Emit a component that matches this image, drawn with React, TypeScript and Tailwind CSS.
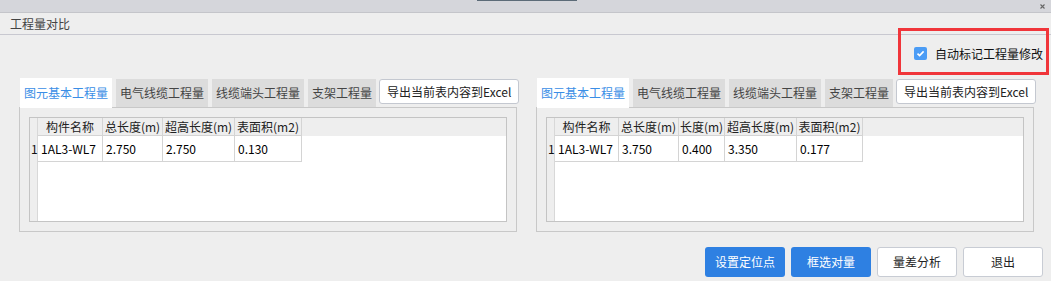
import React from "react";

type Col = { title: string; w: number };

const leftCols: Col[] = [
  { title: "构件名称", w: 65 },
  { title: "总长度(m)", w: 60 },
  { title: "超高长度(m)", w: 72 },
  { title: "表面积(m2)", w: 67 },
];
const leftRow = ["1AL3-WL7", "2.750", "2.750", "0.130"];

const rightCols: Col[] = [
  { title: "构件名称", w: 64 },
  { title: "总长度(m)", w: 60 },
  { title: "长度(m)", w: 46 },
  { title: "超高长度(m)", w: 72 },
  { title: "表面积(m2)", w: 66 },
];
const rightRow = ["1AL3-WL7", "3.750", "0.400", "3.350", "0.177"];

function Grid({ cols, row }: { cols: Col[]; row: string[] }) {
  return (
    <div className="flex h-[105px] border border-[#c4c4c4] bg-white">
      <div className="flex w-[8px] shrink-0 flex-col border-r border-[#d8d8d8] bg-[#eeeeee]">
        <div className="h-[18px]" />
        <div className="flex h-[26px] items-center pl-[1px] text-[12px] leading-none text-[#111]">1</div>
      </div>
      <div className="flex flex-1 flex-col">
        <div className="flex h-[18px] bg-[#eeeeee]">
          {cols.map((c) => (
            <div
              key={c.title}
              style={{ width: c.w }}
              className="flex shrink-0 items-center justify-center whitespace-nowrap border-r border-b border-[#d4d4d4] text-[12px] leading-none text-[#222]"
            >
              {c.title}
            </div>
          ))}
        </div>
        <div className="flex h-[26px]">
          {cols.map((c, i) => (
            <div
              key={c.title}
              style={{ width: c.w }}
              className="flex shrink-0 items-center whitespace-nowrap border-r border-b border-[#d4d4d4] pl-[3px] text-[12px] leading-none text-[#000]"
            >
              {row[i]}
            </div>
          ))}
        </div>
      </div>
    </div>
  );
}

const tabs = ["图元基本工程量", "电气线缆工程量", "线缆端头工程量", "支架工程量"];

function Panel({ cols, row }: { cols: Col[]; row: string[] }) {
  return (
    <div className="flex w-[498px] shrink-0 flex-col">
      <div className="flex h-[29px] items-end">
        {tabs.map((t, i) =>
          i === 0 ? (
            <div
              key={t}
              className="relative z-10 -mb-px ml-px flex h-[30px] shrink-0 items-center whitespace-nowrap bg-white px-[4px] text-[12px] leading-none text-[#3a8ee6]"
            >
              {t}
            </div>
          ) : (
            <div
              key={t}
              className="ml-[4px] flex h-[28px] shrink-0 items-center whitespace-nowrap bg-[#dcdcdc] px-[4px] text-[12px] leading-none text-[#444]"
            >
              {t}
            </div>
          )
        )}
        <div className="mb-[3px] ml-[3px] flex h-[25px] shrink-0 items-center whitespace-nowrap rounded-[3px] border border-[#c4c8d0] bg-white px-[7px] text-[12px] leading-none text-[#222]">
          导出当前表内容到Excel
        </div>
      </div>
      <div className="border border-[#c8c8c8] bg-[#eeeeee] p-[9px]">
        <Grid cols={cols} row={row} />
      </div>
    </div>
  );
}

export default function App() {
  return (
    <div className="relative flex h-[281px] w-[1051px] flex-col overflow-hidden bg-[#eeeeee] font-['Noto_Sans_CJK_SC','Microsoft_YaHei',sans-serif]">
      {/* window top strip */}
      <div className="flex h-[13px] shrink-0 items-start border-b border-[#c4c5ca] bg-[#d5d6db]">
        <div className="w-[477px]" />
        <div className="h-px w-[100px] bg-[#5c6b78]" />
        <div className="flex-1" />
        <svg className="mr-[6px] mt-[4px]" width="5" height="5" viewBox="0 0 5 5">
          <path d="M0.5 0.5 L4.5 4.5 M4.5 0.5 L0.5 4.5" stroke="#666" strokeWidth="1.1" />
        </svg>
      </div>
      {/* title */}
      <div className="flex h-[22px] shrink-0 items-center border-b border-[#c8c8d0] pl-[10px] text-[12px] leading-none text-[#444]">
        工程量对比
      </div>
      {/* checkbox */}
      <div className="mt-[12px] flex h-[13px] items-center justify-end pr-[8px]">
        <div className="flex h-[13px] w-[13px] items-center justify-center rounded-[2px] bg-[#4b9cf5]">
          <svg width="9" height="9" viewBox="0 0 9 9">
            <path d="M1.5 4.6 L3.6 6.6 L7.6 2.4" fill="none" stroke="white" strokeWidth="1.6" />
          </svg>
        </div>
        <div className="ml-[8px] text-[12px] leading-none text-[#111]">自动标记工程量修改</div>
      </div>
      {/* panels */}
      <div className="mt-[18px] flex gap-[19px] pl-[19px]">
        <Panel cols={leftCols} row={leftRow} />
        <Panel cols={rightCols} row={rightRow} />
      </div>
      {/* buttons */}
      <div className="mt-[15px] flex justify-end gap-[6px] pr-[8px]">
        <div className="flex h-[30px] w-[80px] items-center justify-center rounded-[3px] bg-[#2e80e2] text-[12px] leading-none text-white">
          设置定位点
        </div>
        <div className="flex h-[30px] w-[80px] items-center justify-center rounded-[3px] bg-[#2e80e2] text-[12px] leading-none text-white">
          框选对量
        </div>
        <div className="flex h-[30px] w-[80px] items-center justify-center rounded-[3px] border border-[#c8ccd4] bg-white text-[12px] leading-none text-[#222]">
          量差分析
        </div>
        <div className="flex h-[30px] w-[80px] items-center justify-center rounded-[3px] border border-[#c8ccd4] bg-white text-[12px] leading-none text-[#222]">
          退出
        </div>
      </div>
      {/* annotation box */}
      <div className="absolute left-[898px] top-[28px] h-[47px] w-[151px] border-[3px] border-[#f0353a]" />
    </div>
  );
}
